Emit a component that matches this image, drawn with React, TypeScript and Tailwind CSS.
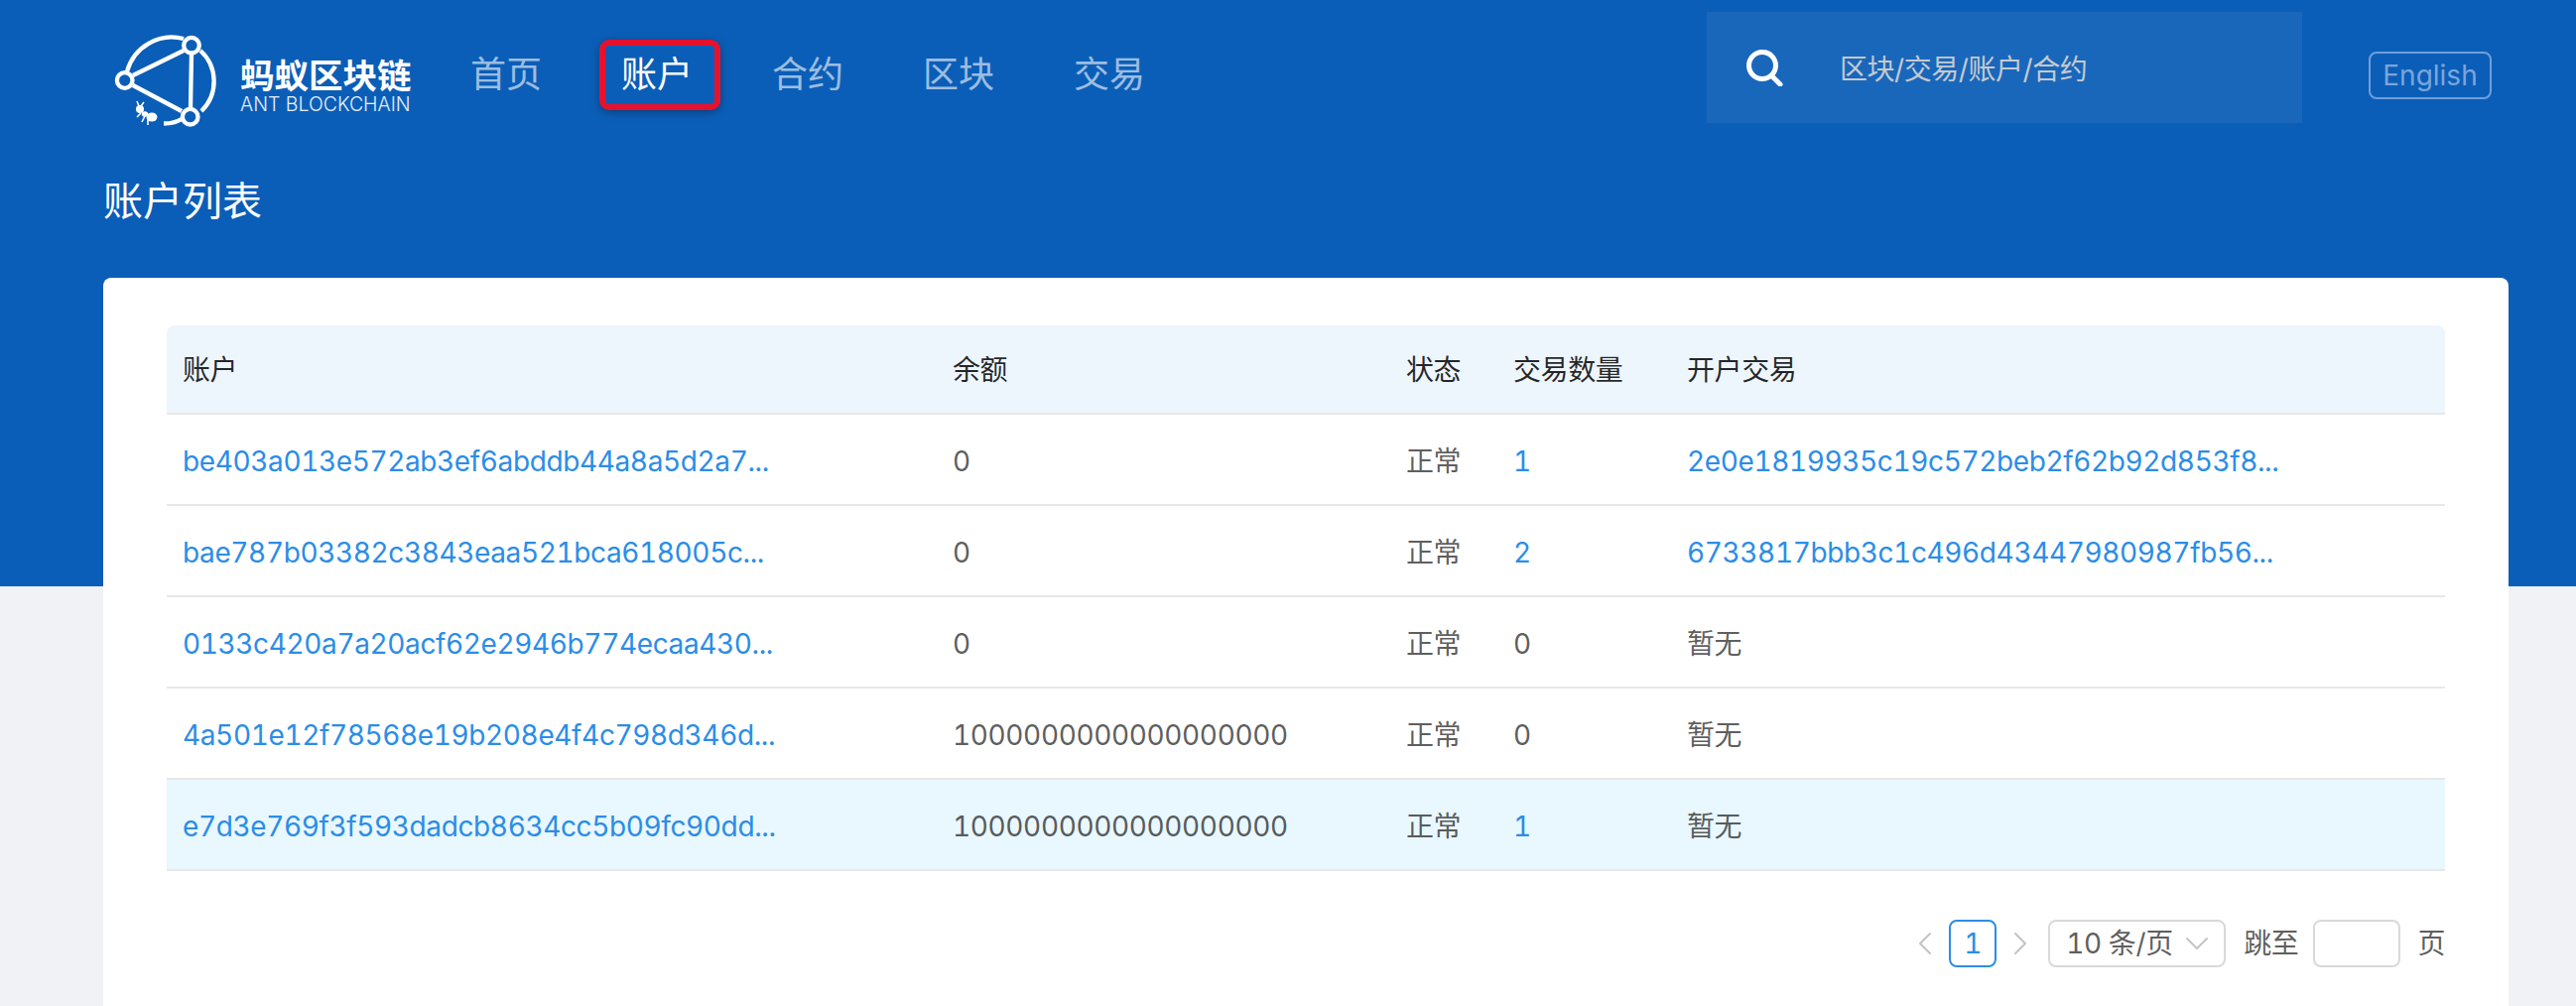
import { ChevronDown, ChevronLeft, ChevronRight } from "lucide-react";

const fontStack = "font-['Inter','Noto_Sans_CJK_SC',sans-serif]";

const navItems = ["首页", "账户", "合约", "区块", "交易"];

const rows = [
  { account: "be403a013e572ab3ef6abddb44a8a5d2a7...", balance: "0", count: "1", tx: "2e0e1819935c19c572beb2f62b92d853f8..." },
  { account: "bae787b03382c3843eaa521bca618005c...", balance: "0", count: "2", tx: "6733817bbb3c1c496d43447980987fb56..." },
  { account: "0133c420a7a20acf62e2946b774ecaa430...", balance: "0", count: "0", tx: "" },
  { account: "4a501e12f78568e19b208e4f4c798d346d...", balance: "1000000000000000000", count: "0", tx: "" },
  { account: "e7d3e769f3f593dadcb8634cc5b09fc90dd...", balance: "1000000000000000000", count: "1", tx: "" },
];

function Logo() {
  return (
    <svg width="130" height="110" viewBox="0 0 130 110" className="shrink-0" fill="none" stroke="white" strokeWidth="4.3">
      <path d="M18 47 A 47 47 0 0 1 75 14" />
      <path d="M92 26 A 42 42 0 0 1 93 87" />
      <path d="M55 99.5 Q 66 99.5 73 95" />
      <path d="M24 51 L 75 26 M24 61 L 73 87 M83 29 L 82 84" />
      <circle cx="15.7" cy="56" r="7.8" />
      <circle cx="83" cy="20.7" r="7.8" />
      <circle cx="81.7" cy="92.7" r="7.8" />
      <g fill="white" stroke="none">
        <ellipse cx="31" cy="85" rx="4" ry="4" />
        <ellipse cx="36" cy="90" rx="3.2" ry="2.8" />
        <ellipse cx="43" cy="93" rx="5.5" ry="4.5" />
      </g>
      <path d="M30 82 L 28 77 M32 82 L 35 78 M32 89 L 28 93 M36 92 L 33 98 M39 93 L 39 101" strokeWidth="1.6" />
    </svg>
  );
}

function SearchIcon() {
  return (
    <svg width="38" height="38" viewBox="0 0 38 38" fill="none" stroke="white" strokeWidth="5" strokeLinecap="round" className="shrink-0">
      <circle cx="17" cy="17" r="13.5" />
      <path d="M27 28 L 35 36" />
    </svg>
  );
}

export default function App() {
  return (
    <div className={`h-[1014px] overflow-hidden bg-[#f0f2f5] ${fontStack}`}>
      <header className="h-[591px] bg-[#0b5eb7]">
        <div className="flex h-[173px] items-start">
          <div className="ml-[110px] mt-[25px]">
            <Logo />
          </div>
          <div className="ml-[2px] mt-[55px] w-[174px]">
            <div className="text-[34.5px] font-bold leading-[44px] text-white">蚂蚁区块链</div>
            <div className="-mt-[5px] whitespace-nowrap text-[19.5px] font-light leading-[22px] text-white/90">ANT BLOCKCHAIN</div>
          </div>
          <nav className="ml-[58px] mt-[40px] flex gap-[80px]">
            {navItems.map((item) => (
              <a
                key={item}
                className={
                  item === "账户"
                    ? "relative text-[36px] leading-[70px] text-white before:absolute before:-left-[22px] before:-right-[28px] before:top-0 before:-bottom-[1px] before:rounded-[10px] before:border-[6px] before:border-[#e8112d] before:shadow-[0_2px_8px_rgba(0,0,0,0.35)] before:content-['']"
                    : "text-[36px] leading-[70px] text-white/60"
                }
              >
                {item}
              </a>
            ))}
          </nav>
          <div className="ml-auto mt-[12px] flex h-[112px] w-[600px] items-start bg-white/[0.06] pl-[39px] pt-[37px]">
            <SearchIcon />
            <span className="ml-[57px] -mt-[1px] text-[28px] leading-[44px] tracking-[-0.45px] text-[#c4c9d0]">区块/交易/账户/合约</span>
          </div>
          <button className="ml-[67px] mr-[85px] mt-[52px] h-[48px] w-[124px] rounded-[8px] border-2 border-[#6f9edb] text-[28px] leading-[44px] text-[#7ba5dc]">
            English
          </button>
        </div>
        <h1 className="ml-[104px] text-[40px] font-normal leading-[60px] text-white">账户列表</h1>
      </header>

      <main className="ml-[104px] mr-[68px] -mt-[311px] h-[734px] rounded-t-[8px] bg-white px-[64px] pt-[48px] text-[28px] tabular-nums tracking-[-0.38px]">
        <table className="w-full table-fixed border-separate border-spacing-0 text-left">
          <colgroup>
            <col className="w-[776px]" />
            <col className="w-[457px]" />
            <col className="w-[108px]" />
            <col className="w-[175px]" />
            <col />
          </colgroup>
          <thead>
            <tr className="h-[90px] text-[rgba(0,0,0,0.85)]">
              {["账户", "余额", "状态", "交易数量", "开户交易"].map((title, i) => (
                <th
                  key={title}
                  className={`border-b-2 border-[#e8e8e8] bg-[#edf5fd] px-[16px] pt-[2px] font-normal ${i === 0 ? "rounded-tl-[8px]" : ""} ${i === 4 ? "rounded-tr-[8px]" : ""}`}
                >
                  {title}
                </th>
              ))}
            </tr>
          </thead>
          <tbody className="text-[rgba(0,0,0,0.65)]">
            {rows.map((row, i) => {
              const cell = `h-[92px] border-b-2 border-[#e8e8e8] px-[16px] pt-[3px] whitespace-nowrap ${i === 4 ? "bg-[#e9f7fe]" : ""}`;
              return (
                <tr key={row.account}>
                  <td className={`${cell} text-[#2b8de6]`}>{row.account}</td>
                  <td className={cell}>{row.balance}</td>
                  <td className={cell}>正常</td>
                  <td className={`${cell} ${row.count === "0" ? "" : "text-[#2b8de6]"}`}>{row.count}</td>
                  <td className={`${cell} ${row.tx ? "text-[#2b8de6]" : ""}`}>{row.tx || "暂无"}</td>
                </tr>
              );
            })}
          </tbody>
        </table>

        <div className="mt-[49px] flex h-[48px] items-center justify-end text-[rgba(0,0,0,0.65)]">
          <ChevronLeft size={40} strokeWidth={1.2} className="text-[#c4c4c4]" />
          <div className="ml-[4px] flex h-[48px] w-[48px] items-center justify-center rounded-[8px] border-2 border-[#2b8de6] text-[#2b8de6]">1</div>
          <ChevronRight size={40} strokeWidth={1.2} className="ml-[4px] text-[#c4c4c4]" />
          <div className="ml-[8px] flex h-[48px] w-[179px] items-center rounded-[8px] border-2 border-[#d9d9d9] pl-[16px]">
            <span className="whitespace-nowrap">10 条/页</span>
            <ChevronDown size={40} strokeWidth={1.2} className="ml-auto mr-[7px] text-[#c4c4c4]" />
          </div>
          <span className="ml-[18px]">跳至</span>
          <div className="ml-[15px] h-[48px] w-[88px] rounded-[8px] border-2 border-[#d9d9d9]" />
          <span className="ml-[17px]">页</span>
        </div>
      </main>
    </div>
  );
}
